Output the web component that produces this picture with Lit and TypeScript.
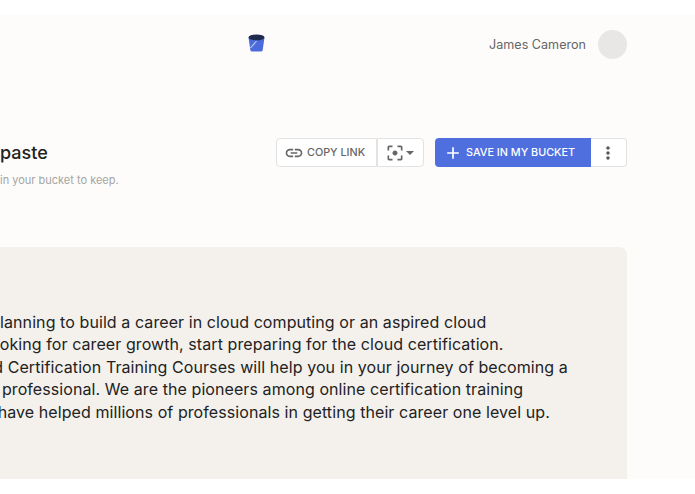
import { LitElement, html, css } from 'lit';
import { customElement } from 'lit/decorators.js';

// the page is wider than the window and scrolled sideways, so text starts left of x=0
const LINES = [
  { text: 'Whether you are planning to build a career in cloud computing or an aspired cloud', indent: -1 },
  { text: 'professional looking for career growth, start preparing for the cloud certification.', indent: 28 },
  { text: 'Whizlabs Cloud Certification Training Courses will help you in your journey of becoming a', indent: 24 },
  { text: 'certified cloud professional. We are the pioneers among online certification training', indent: 27 },
  { text: 'providers and have helped millions of professionals in getting their career one level up.', indent: 28 },
];

@customElement('app-root')
export class AppRoot extends LitElement {
  static styles = css`
    :host {
      display: block;
      width: 695px;
      height: 494px;
      overflow: hidden;
      background: #fff;
      padding-top: 15px;
      box-sizing: border-box;
      font-family: Inter, 'Liberation Sans', sans-serif;
      color: #222;
    }
    .page {
      height: 464px;
      background: #fdfcfa;
      padding: 0 68px 0 0;
      box-sizing: border-box;
      display: flex;
      flex-direction: column;
      align-items: flex-end;
      overflow: hidden;
    }
    .nav {
      width: 100%;
      height: 59px;
      display: flex;
      align-items: center;
      justify-content: space-between;
      padding-left: 248px;
      box-sizing: border-box;
    }
    .logo { display: block; margin-top: -3px; }
    .user {
      display: flex;
      align-items: center;
      gap: 12px;
      font-size: 12.6px;
      color: #666;
    }
    .avatar {
      width: 29px;
      height: 29px;
      border-radius: 50%;
      background: #e8e7e5;
    }
    .head {
      width: 100%;
      display: flex;
      justify-content: space-between;
      margin-top: 64px;
    }
    h1 {
      margin: 3px 0 0;
      font-size: 18px;
      line-height: 24px;
      font-weight: 500;
      color: #222;
    }
    .hint {
      margin: 8px 0 0;
      font-size: 11px;
      line-height: 14px;
      color: #a5a5a3;
    }
    .actions { display: flex; gap: 11px; }
    .group { display: flex; height: 29px; }
    .btn {
      display: flex;
      align-items: center;
      box-sizing: border-box;
      height: 29px;
      border: 1px solid #e3e2e0;
      background: #fff;
      font-size: 10.8px;
      font-weight: 500;
      color: #666;
    }
    .copy { width: 101px; padding-left: 7px; gap: 3px; border-radius: 4px 0 0 4px; }
    .shot { width: 47px; padding-left: 7px; gap: 1px; border-left: 1px solid #e3e2e0; border-radius: 0 4px 4px 0; }
    .save {
      width: 156px;
      padding-left: 8px;
      gap: 3px;
      border: 0;
      border-radius: 4px 0 0 4px;
      background: #4f6fdf;
      color: #fff;
    }
    .more {
      width: 36px;
      padding-right: 1px;
      justify-content: center;
      border-left: 0;
      border-radius: 0 4px 4px 0;
    }
    .panel {
      width: 100%;
      flex: 1;
      margin-top: 60px;
      background: #f4f1ed;
      border-radius: 0 8px 0 0;
      padding-top: 64px;
      font-size: 16px;
      line-height: 22.4px;
      letter-spacing: 0.08px;
      color: #222;
      white-space: nowrap;
      overflow: hidden;
    }
    .text { margin-left: -140px; }
  `;

  render() {
    return html`
      <div class="page">
        <div class="nav">
          <svg class="logo" width="17" height="18" viewBox="0 0 17 18">
            <path d="M0.5 3.5h16l-1.8 12.5q-.2 1.6-1.8 1.6H4.1q-1.6 0-1.8-1.6z" fill="#4b6bdc" />
            <ellipse cx="8.5" cy="3.4" rx="8" ry="2.9" fill="#1f2b4d" />
            <path d="M2.5 14L8.5 7" stroke="#c3cdf0" stroke-width="1.1" />
          </svg>
          <div class="user">James Cameron <span class="avatar"></span></div>
        </div>
        <div class="head">
          <div>
            <h1>paste</h1>
            <p class="hint">in your bucket to keep.</p>
          </div>
          <div class="actions">
            <div class="group">
              <div class="btn copy">
                <svg width="20" height="20" viewBox="0 0 24 24" fill="#666">
                  <path d="M3.9 12c0-1.71 1.39-3.1 3.1-3.1h4V7H7c-2.76 0-5 2.24-5 5s2.24 5 5 5h4v-1.9H7c-1.71 0-3.1-1.39-3.1-3.1zM8 13h8v-2H8v2zm9-6h-4v1.9h4c1.71 0 3.1 1.39 3.1 3.1s-1.39 3.1-3.1 3.1h-4V17h4c2.76 0 5-2.24 5-5s-2.24-5-5-5z" />
                </svg>
                COPY LINK
              </div>
              <div class="btn shot">
                <svg width="20" height="20" viewBox="0 0 24 24" fill="#666">
                  <path d="M5 15H3v4c0 1.1.9 2 2 2h4v-2H5v-4zM5 5h4V3H5c-1.1 0-2 .9-2 2v4h2V5zm14-2h-4v2h4v4h2V5c0-1.1-.9-2-2-2zm0 16h-4v2h4c1.1 0 2-.9 2-2v-4h-2v4zM12 9c-1.66 0-3 1.34-3 3s1.34 3 3 3 3-1.34 3-3-1.34-3-3-3z" />
                </svg>
                <svg width="8" height="4" viewBox="0 0 8 4" fill="#666"><path d="M0 0h8L4 4z" /></svg>
              </div>
            </div>
            <div class="group">
              <div class="btn save">
                <svg width="20" height="20" viewBox="0 0 24 24" fill="#fff">
                  <path d="M19 13h-6v6h-2v-6H5v-2h6V5h2v6h6v2z" />
                </svg>
                SAVE IN MY BUCKET
              </div>
              <div class="btn more">
                <svg width="20" height="20" viewBox="0 0 24 24" fill="#555">
                  <path d="M12 8c1.1 0 2-.9 2-2s-.9-2-2-2-2 .9-2 2 .9 2 2 2zm0 2c-1.1 0-2 .9-2 2s.9 2 2 2 2-.9 2-2-.9-2-2-2zm0 6c-1.1 0-2 .9-2 2s.9 2 2 2 2-.9 2-2-.9-2-2-2z" />
                </svg>
              </div>
            </div>
          </div>
        </div>
        <div class="panel">
          <div class="text">
            ${LINES.map((line) => html`<div style="margin-left: ${line.indent}px">${line.text}</div>`)}
          </div>
        </div>
      </div>
    `;
  }
}
